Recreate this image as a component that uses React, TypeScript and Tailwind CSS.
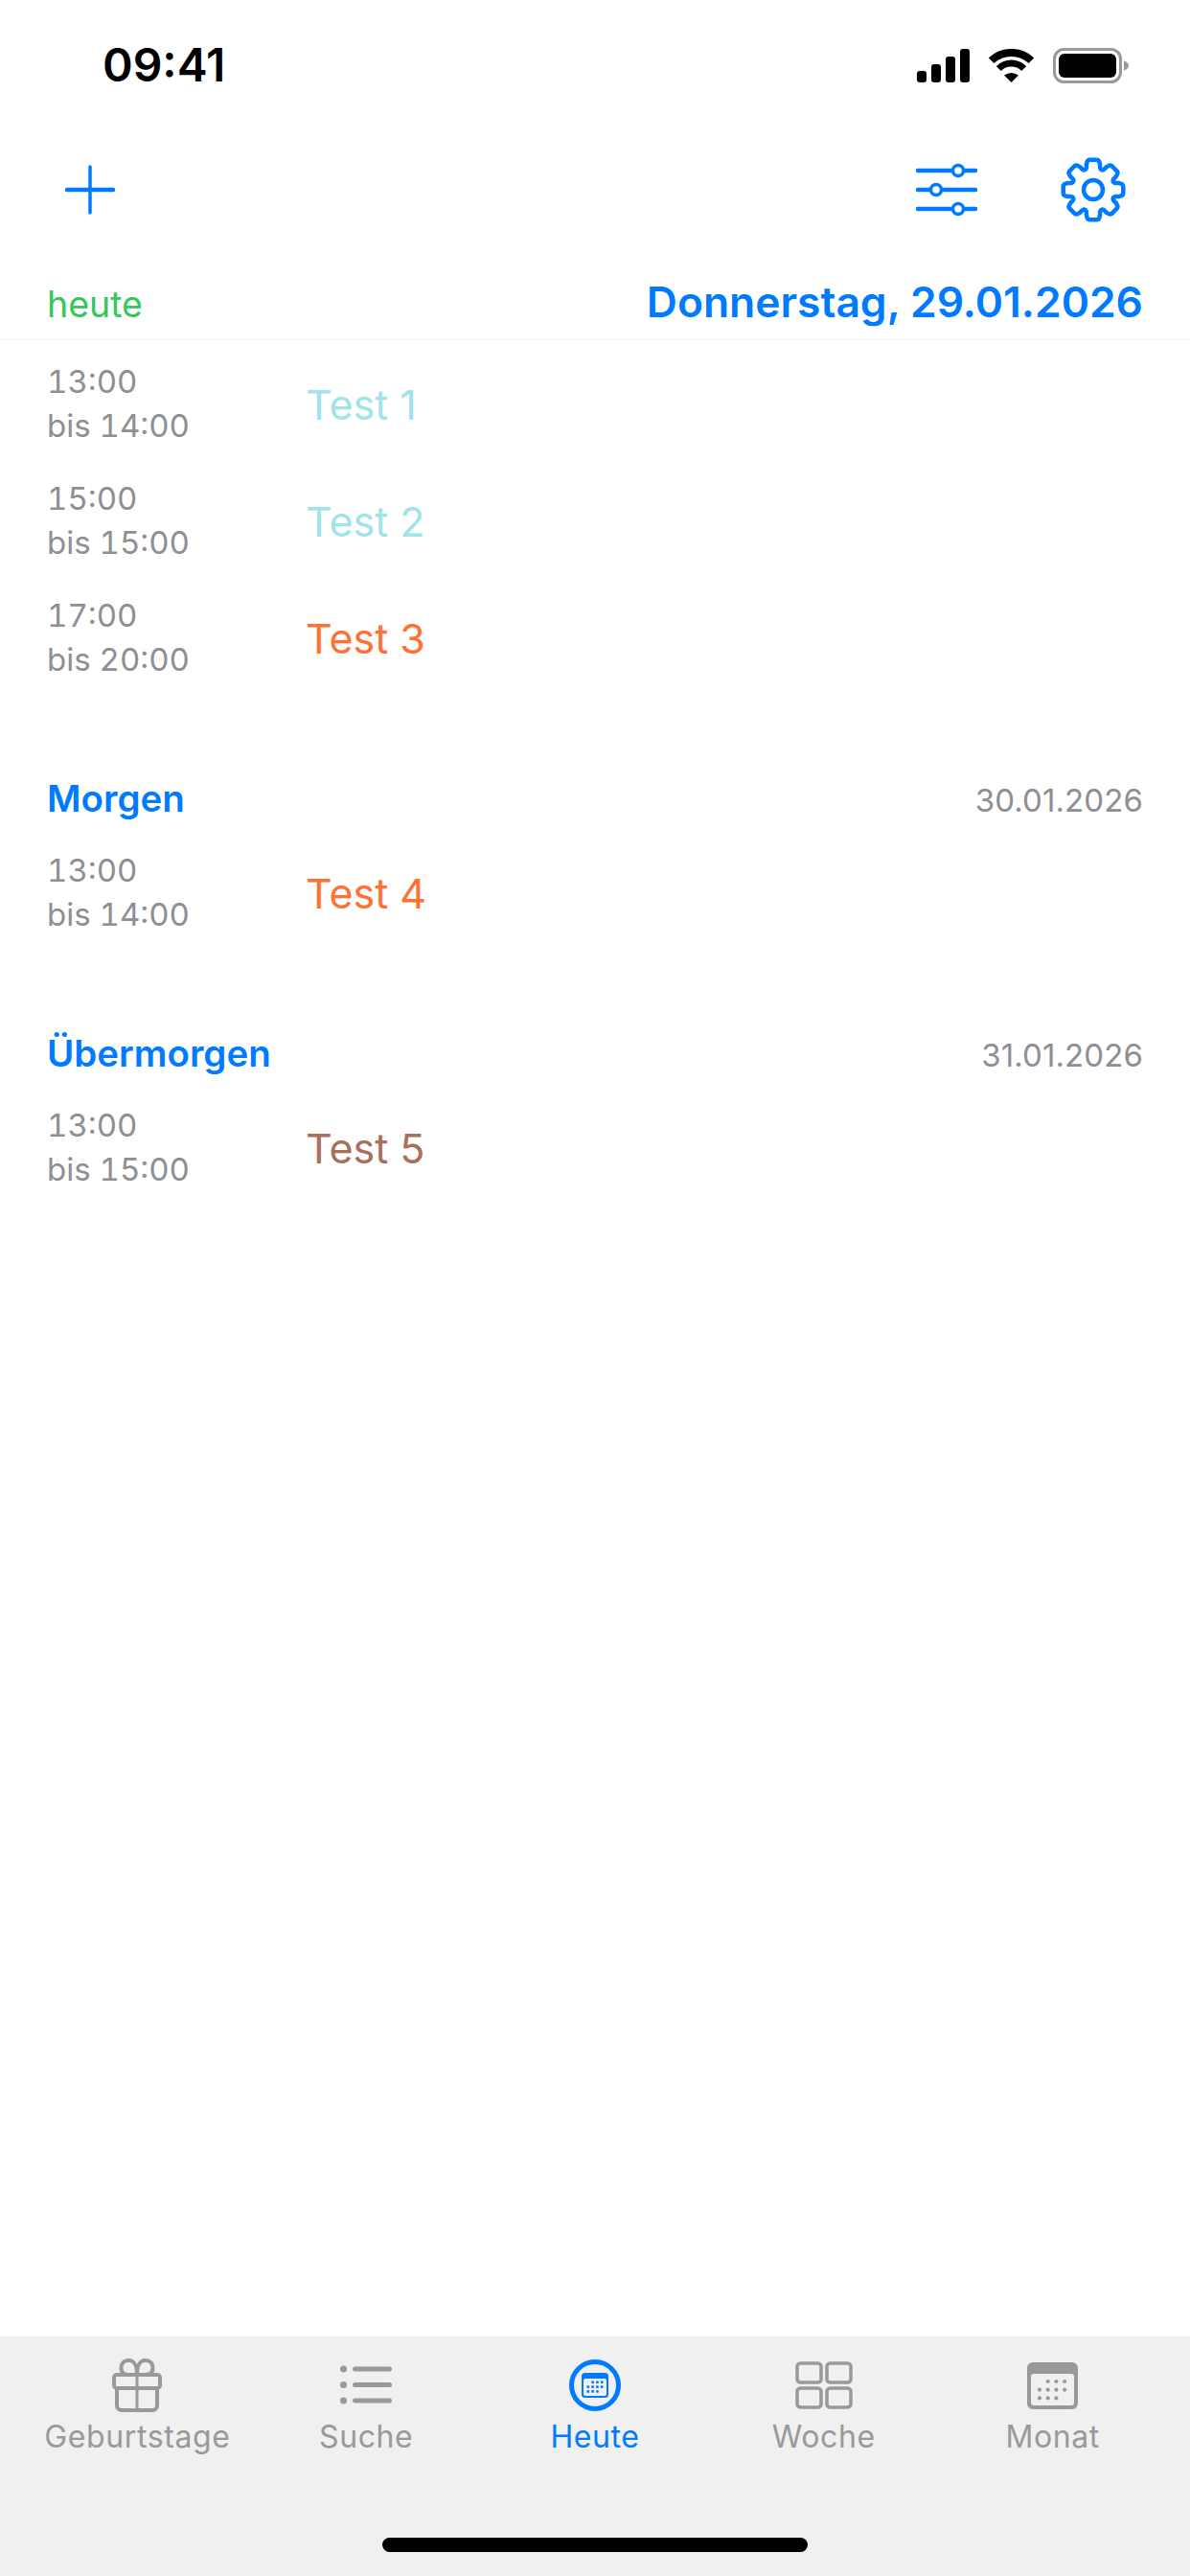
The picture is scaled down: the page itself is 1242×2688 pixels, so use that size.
import React from "react";

const BLUE = "#007aff";
const GREY = "#999999";

function gearPath(cx: number, cy: number, rOut: number, rIn: number) {
  const pt = (deg: number, r: number) => {
    const a = ((deg - 90) * Math.PI) / 180;
    return `${(cx + r * Math.cos(a)).toFixed(2)} ${(cy + r * Math.sin(a)).toFixed(2)}`;
  };
  let d = "";
  for (let i = 0; i < 8; i++) {
    const c = i * 45;
    const rMid = rIn + (rOut - rIn) * 0.55;
    d += `${i === 0 ? "M" : "L"}${pt(c - 22.5, rIn)} `;
    d += `Q${pt(c - 17, rIn)} ${pt(c - 15, rMid)} `;
    d += `L${pt(c - 12.5, rOut - 2)} Q${pt(c - 11, rOut)} ${pt(c - 7, rOut)} `;
    d += `L${pt(c + 7, rOut)} Q${pt(c + 11, rOut)} ${pt(c + 12.5, rOut - 2)} `;
    d += `L${pt(c + 15, rMid)} Q${pt(c + 17, rIn)} ${pt(c + 22.5, rIn)} `;
  }
  return d + "Z";
}

function SignalIcon() {
  return (
    <svg width="55" height="35" viewBox="0 0 55 35" fill="#000">
      <rect x="0" y="23" width="10" height="12" rx="3" />
      <rect x="15" y="16" width="10" height="19" rx="3" />
      <rect x="30" y="8" width="10" height="27" rx="3" />
      <rect x="45" y="0" width="10" height="35" rx="3" />
    </svg>
  );
}

function WifiIcon() {
  return (
    <svg width="47" height="35" viewBox="0 0 47 35" fill="none" stroke="#000">
      <path d="M2.6 12.2A30.6 30.6 0 0 1 44.4 12.2" strokeWidth="8" />
      <path d="M10.3 20.6A18.6 18.6 0 0 1 36.7 20.6" strokeWidth="7" />
      <path d="M23.5 35L16 27.6Q23.5 22.4 31 27.6Z" fill="#000" stroke="none" />
    </svg>
  );
}

function BatteryIcon() {
  return (
    <svg width="79" height="37" viewBox="0 0 79 37">
      <rect x="1.5" y="1.5" width="69" height="34" rx="10" fill="none" stroke="#999" strokeWidth="3" />
      <rect x="6" y="6" width="60" height="25" rx="6" fill="#000" />
      <path d="M74 13.5C77 14.5 79 16 79 18.5C79 21 77 22.5 74 23.5Z" fill="#999" />
    </svg>
  );
}

function PlusIcon() {
  return (
    <svg width="52" height="52" viewBox="0 0 52 52" stroke={BLUE} strokeLinecap="round">
      <path d="M26 2V50" strokeWidth="3.5" />
      <path d="M2 26H50" strokeWidth="4.5" />
    </svg>
  );
}

function SlidersIcon() {
  return (
    <svg width="64" height="56" viewBox="0 0 64 56" fill="#fff" stroke={BLUE} strokeLinecap="round">
      <path d="M2 8H62M2 28H62M2 48H62" strokeWidth="4.5" />
      <circle cx="44" cy="8" r="5.5" strokeWidth="3.5" />
      <circle cx="21" cy="28" r="5.5" strokeWidth="3.5" />
      <circle cx="44" cy="48" r="5.5" strokeWidth="3.5" />
    </svg>
  );
}

function GearIcon() {
  return (
    <svg width="68" height="68" viewBox="0 0 68 68" fill="none" stroke={BLUE} strokeWidth="4.5" strokeLinejoin="round">
      <path d={gearPath(34, 34, 31.5, 22.5)} />
      <circle cx="34" cy="34" r="10" />
    </svg>
  );
}

function GiftIcon() {
  return (
    <svg width="52" height="56" viewBox="0 0 52 56" fill="none" stroke={GREY} strokeWidth="4" strokeLinejoin="round">
      <rect x="2" y="17" width="48" height="14" rx="3" />
      <path d="M5 31V49C5 52 7 54 10 54H42C45 54 47 52 47 49V31" />
      <path d="M26 17V54" strokeWidth="3" />
      <path d="M26 17H17C11 17 9 13 9.5 9C10 4 14 2 17.5 2C22.5 2 26 7 26 17C26 7 29.5 2 34.5 2C38 2 42 4 42.5 9C43 13 41 17 35 17H26Z" />
    </svg>
  );
}

function ListIcon() {
  return (
    <svg width="54" height="42" viewBox="0 0 54 42" fill={GREY} stroke="none">
      <circle cx="3.5" cy="4" r="3.5" />
      <circle cx="3.5" cy="20.5" r="3.5" />
      <circle cx="3.5" cy="37" r="3.5" />
      <rect x="13" y="1.5" width="41" height="5" rx="2.5" />
      <rect x="13" y="18" width="41" height="5" rx="2.5" />
      <rect x="13" y="34.5" width="41" height="5" rx="2.5" />
    </svg>
  );
}

// Month grid dots shared by the calendar glyphs: first row starts at column 1, last row ends at column 2.
const DOT_CELLS: [number, number][] = [
  [1, 0], [2, 0], [3, 0],
  [0, 1], [1, 1], [2, 1], [3, 1],
  [0, 2], [1, 2], [2, 2],
];

function TodayIcon() {
  return (
    <svg width="54" height="54" viewBox="0 0 54 54">
      <circle cx="27" cy="27" r="24.5" fill="none" stroke={BLUE} strokeWidth="5" />
      <rect x="13" y="14" width="28" height="26" rx="3.5" fill={BLUE} />
      <rect x="15" y="20" width="24" height="18" rx="2" fill="#f0f0f0" />
      {DOT_CELLS.map(([c, r]) => (
        <rect key={`${c}-${r}`} x={18.5 + c * 4.8} y={22.5 + r * 4.8} width="2.6" height="2.6" fill={BLUE} />
      ))}
    </svg>
  );
}

function WeekIcon() {
  return (
    <svg width="60" height="50" viewBox="0 0 60 50" fill="none" stroke={GREY} strokeWidth="3.5">
      <rect x="2" y="2" width="25" height="20" rx="3.5" />
      <rect x="33" y="2" width="25" height="20" rx="3.5" />
      <rect x="2" y="28" width="25" height="20" rx="3.5" />
      <rect x="33" y="28" width="25" height="20" rx="3.5" />
    </svg>
  );
}

function MonthIcon() {
  return (
    <svg width="53" height="49" viewBox="0 0 53 49">
      <rect x="0" y="0" width="53" height="49" rx="6" fill={GREY} />
      <rect x="4" y="12" width="45" height="33" rx="3" fill="#f0f0f0" />
      {DOT_CELLS.map(([c, r]) => (
        <circle key={`${c}-${r}`} cx={13 + c * 8.7} cy={20 + r * 8.7} r="2.1" fill={GREY} />
      ))}
    </svg>
  );
}

function EventRow({ from, to, title, color }: { from: string; to: string; title: string; color: string }) {
  return (
    <div className="flex h-[122px] items-center pl-[49px]">
      <div className="w-[270px] text-[33px] leading-[46px] tabular-nums text-[#8e8e93]">
        <div>{from}</div>
        <div>bis {to}</div>
      </div>
      <div className="pt-[2px] text-[43px] leading-[52px]" style={{ color }}>
        {title}
      </div>
    </div>
  );
}

function DayHeader({ label, date }: { label: string; date: string }) {
  return (
    <div className="mt-[79px] flex h-[65px] items-baseline justify-between px-[49px]">
      <span className="text-[38.5px] font-semibold text-[#007aff]">{label}</span>
      <span className="text-[33px] tracking-[0.1px] text-[#8e8e93]">{date}</span>
    </div>
  );
}

function Tab({ label, icon, active }: { label: string; icon: React.ReactNode; active?: boolean }) {
  return (
    <div className={`flex flex-col items-center ${active ? "text-[#007aff]" : "text-[#999999]"}`}>
      <div className="flex h-[64px] items-center justify-center">{icon}</div>
      <span className="mt-[2px] text-[32px] leading-[40px] tracking-[0.6px]">{label}</span>
    </div>
  );
}

export default function App() {
  return (
    <div className="flex h-[2688px] w-[1242px] flex-col bg-white font-['Inter',sans-serif]">
      <header className="flex h-[136px] items-start justify-between pl-[107px] pr-[64px] pt-[48px]">
        <span className="text-[48px] font-semibold leading-[40px] text-black">09:41</span>
        <div className="flex items-center gap-[20px] pt-[2px]">
          <SignalIcon />
          <WifiIcon />
          <BatteryIcon />
        </div>
      </header>

      <nav className="flex h-[124px] items-center justify-between pl-[68px] pr-[67px]">
        <PlusIcon />
        <div className="flex items-center gap-[87px]">
          <SlidersIcon />
          <GearIcon />
        </div>
      </nav>

      <div className="flex h-[95px] items-baseline justify-between border-b border-[#f2f2f2] px-[49px] pt-[22px]">
        <span className="text-[37.5px] text-[#34c759]">heute</span>
        <span className="text-[44.4px] font-semibold text-[#007aff]">Donnerstag, 29.01.2026</span>
      </div>

      <main className="flex-1 pt-[5px]">
        <EventRow from="13:00" to="14:00" title="Test 1" color="#a0e4e9" />
        <EventRow from="15:00" to="15:00" title="Test 2" color="#a0e4e9" />
        <EventRow from="17:00" to="20:00" title="Test 3" color="#ff7033" />
        <DayHeader label="Morgen" date="30.01.2026" />
        <EventRow from="13:00" to="14:00" title="Test 4" color="#ff7033" />
        <DayHeader label="Übermorgen" date="31.01.2026" />
        <EventRow from="13:00" to="15:00" title="Test 5" color="#a96f5a" />
      </main>

      <footer className="flex h-[250px] flex-col bg-[#f0f0f0]">
        <div className="grid grid-cols-5 px-[24px] pt-[19px]">
          <Tab label="Geburtstage" icon={<GiftIcon />} />
          <Tab label="Suche" icon={<ListIcon />} />
          <Tab label="Heute" icon={<TodayIcon />} active />
          <Tab label="Woche" icon={<WeekIcon />} />
          <Tab label="Monat" icon={<MonthIcon />} />
        </div>
        <div className="mx-auto mt-[85px] h-[15px] w-[444px] rounded-full bg-black" />
      </footer>
    </div>
  );
}
